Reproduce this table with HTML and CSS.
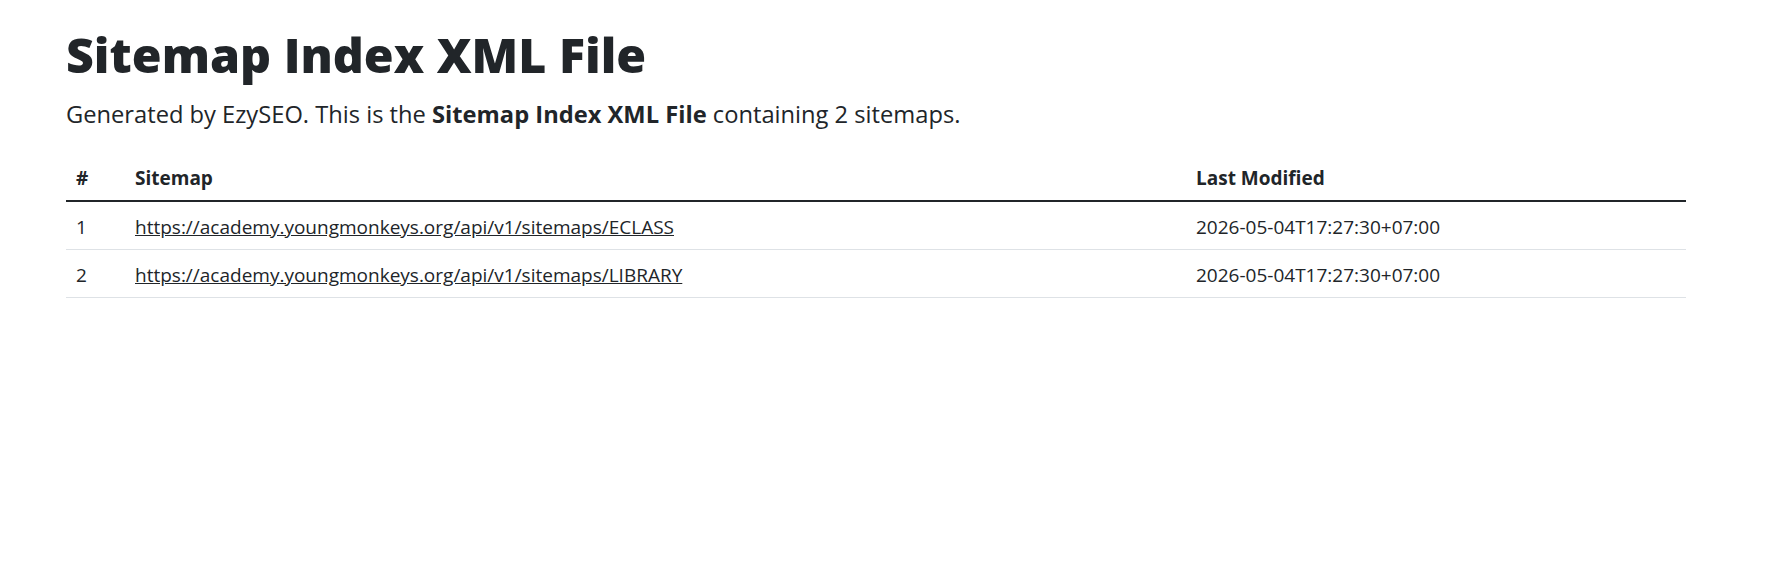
FILE: index.html
```html
<!DOCTYPE html>
<html lang="en">
  <head>
    <meta charset="UTF-8" />
    <meta name="viewport" content="width=device-width, initial-scale=1.0" />
    <title>Sitemap Index XML File</title>
    <link rel="stylesheet" href="styles.css">
  </head>

  <body>
    <div class="page">
      <h1 class="title">Sitemap Index XML File</h1>
      <p class="lead">Generated by EzySEO. This is the <strong>Sitemap Index XML File</strong> containing 2 sitemaps.</p>

      <table class="sitemaps">
        <thead>
          <tr>
            <th class="col-num">#</th>
            <th class="col-loc">Sitemap</th>
            <th class="col-mod">Last Modified</th>
          </tr>
        </thead>
        <tbody>
          <tr>
            <td>1</td>
            <td><a href="#">https://academy.youngmonkeys.org/api/v1/sitemaps/ECLASS</a></td>
            <td>2026-05-04T17:27:30+07:00</td>
          </tr>
          <tr>
            <td>2</td>
            <td><a href="#">https://academy.youngmonkeys.org/api/v1/sitemaps/LIBRARY</a></td>
            <td>2026-05-04T17:27:30+07:00</td>
          </tr>
        </tbody>
      </table>
    </div>
  </body>
</html>
```

FILE: styles.css
```css
* {
  box-sizing: border-box;
}
body {
  margin: 0;
  background: #fff;
  color: #212529;
  font-family: "Open Sans", "Noto Sans", sans-serif;
  font-size: 19px;
  line-height: 1.5;
}

.page {
  padding: 26px 92px 0 66px;
}

.title {
  margin: 0 0 13px;
  font-size: 48.3px;
  font-weight: 800;
  line-height: 1.2;
}

.lead {
  margin: 0 0 20px;
  font-size: 23.7px;
  font-weight: 400;
}

.sitemaps {
  width: 100%;
  border-collapse: collapse;
}

.sitemaps th,
.sitemaps td {
  padding: 11.5px 10px 7.5px;
  line-height: 28px;
  text-align: left;
  vertical-align: top;
  border-bottom: 1px solid #dee2e6;
}

.sitemaps th {
  font-weight: 700;
  border-bottom: 2px solid #212529;
}

.col-num {
  width: 59px;
}

.col-mod {
  width: 500px;
}

.sitemaps a {
  color: #212529;
  text-decoration: underline;
}
```
